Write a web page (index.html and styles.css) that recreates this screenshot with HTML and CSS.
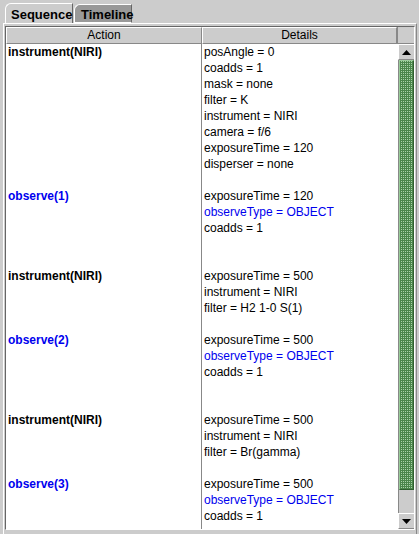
FILE: index.html
```html
<!DOCTYPE html>
<html>
<head>
<meta charset="utf-8">
<link rel="stylesheet" href="styles.css">
</head>
<body>
<div class="app">
  <div class="tabs">
    <div class="tab active">Sequence</div>
    <div class="tab">Timeline</div>
  </div>
  <div class="panel">
    <div class="scrollpane">
      <div class="main">
        <div class="header">
          <div class="hcell action">Action</div>
          <div class="hcell details">Details</div>
        </div>
        <div class="body">
          <div class="row r9">
            <div class="cell action">instrument(NIRI)</div>
            <div class="cell details">
              <div>posAngle = 0</div>
              <div>coadds = 1</div>
              <div>mask = none</div>
              <div>filter = K</div>
              <div>instrument = NIRI</div>
              <div>camera = f/6</div>
              <div>exposureTime = 120</div>
              <div>disperser = none</div>
            </div>
          </div>
          <div class="row r5">
            <div class="cell action blue">observe(1)</div>
            <div class="cell details">
              <div>exposureTime = 120</div>
              <div class="blue">observeType = OBJECT</div>
              <div>coadds = 1</div>
            </div>
          </div>
          <div class="row r4">
            <div class="cell action">instrument(NIRI)</div>
            <div class="cell details">
              <div>exposureTime = 500</div>
              <div>instrument = NIRI</div>
              <div>filter = H2 1-0 S(1)</div>
            </div>
          </div>
          <div class="row r5">
            <div class="cell action blue">observe(2)</div>
            <div class="cell details">
              <div>exposureTime = 500</div>
              <div class="blue">observeType = OBJECT</div>
              <div>coadds = 1</div>
            </div>
          </div>
          <div class="row r4">
            <div class="cell action">instrument(NIRI)</div>
            <div class="cell details">
              <div>exposureTime = 500</div>
              <div>instrument = NIRI</div>
              <div>filter = Br(gamma)</div>
            </div>
          </div>
          <div class="row r5">
            <div class="cell action blue">observe(3)</div>
            <div class="cell details">
              <div>exposureTime = 500</div>
              <div class="blue">observeType = OBJECT</div>
              <div>coadds = 1</div>
            </div>
          </div>
        </div>
      </div>
      <div class="vscroll">
        <div class="corner"></div>
        <div class="btn up"><svg width="9" height="5" viewBox="0 0 9 5"><path d="M4.5 0 L9 5 L0 5 Z" fill="#000"/></svg></div>
        <div class="track">
          <div class="thumb"></div>
          <div class="rest"></div>
        </div>
        <div class="btn down"><svg width="9" height="5" viewBox="0 0 9 5"><path d="M0 0 L9 0 L4.5 5 Z" fill="#000"/></svg></div>
      </div>
    </div>
  </div>
</div>
</body>
</html>
```
FILE: styles.css
```css
* { box-sizing: border-box; }
html, body {
  margin: 0;
  padding: 0;
  background: #cccccc;
  font-family: "Liberation Sans", Arial, sans-serif;
  font-size: 12px;
  color: #000;
}
.app {
  width: 419px;
  height: 534px;
  display: flex;
  flex-direction: column;
  padding: 3px 2px 0 3px;
  overflow: hidden;
}
.tabs {
  display: flex;
  flex: none;
  height: 20px;
  padding-left: 2px;
  gap: 1px;
}
.tab {
  height: 20px;
  padding: 3px 4px 0 6px;
  font-weight: bold;
  font-size: 13px;
  border-top: 1px solid #fff;
  border-left: 1px solid #fff;
  border-right: 1px solid #666;
  border-top-left-radius: 6px 6px;
  background: #999999;
  line-height: 15px;
}
.tab.active {
  background: #cccccc;
  padding-left: 5px;
  width: 68px;
}
.tab:not(.active) {
  width: 58px;
  height: 19px;
  margin-top: 1px;
  padding-top: 2px;
  border-bottom: 1px solid #fff;
}
.panel {
  flex: 1;
  min-height: 0;
  border-top: 1px solid #fff;
  border-left: 1px solid #fff;
  border-right: 1px solid #888;
  padding: 2px 1px 4px 1px;
  display: flex;
}
.scrollpane {
  flex: 1;
  display: flex;
  border-left: 1px solid #666;
  border-top: 1px solid #666;
  border-right: 1px solid #fff;
  border-bottom: 1px solid #fff;
  min-height: 0;
}
.main {
  flex: 1;
  display: flex;
  flex-direction: column;
  min-height: 0;
  overflow: hidden;
}
.header {
  display: flex;
  height: 17px;
  flex: none;
}
.hcell {
  text-align: center;
  border-top: 1px solid #fff;
  border-left: 1px solid #fff;
  border-right: 1px solid #888;
  border-bottom: 1px solid #888;
  line-height: 15px;
  background: #cccccc;
}
.hcell.action { width: 196px; }
.hcell.details { flex: 1; }
.body {
  flex: 1;
  min-height: 0;
  background: #fff;
  overflow: hidden;
}
.row {
  display: flex;
  line-height: 16px;
}
.r9 { height: 144px; }
.r5 { height: 80px; }
.r4 { height: 64px; }
.cell.action {
  width: 196px;
  font-weight: bold;
  padding-left: 2px;
  border-right: 1px solid #888;
}
.cell.details {
  flex: 1;
  padding-left: 2px;
}
.blue { color: #0000ee; }
.vscroll {
  width: 17px;
  flex: none;
  min-height: 0;
  display: flex;
  flex-direction: column;
  background: #cccccc;
  border-left: 1px solid #fff;
}
.corner {
  height: 17px;
  flex: none;
  border-bottom: 1px solid #888;
  border-left: 1px solid #888;
  margin-left: -1px;
}
.btn {
  height: 16px;
  flex: none;
  display: flex;
  align-items: center;
  justify-content: center;
  background: #cccccc;
  border-top: 1px solid #fff;
  border-left: 1px solid #fff;
  border-bottom: 1px solid #888;
}
.track {
  flex: 1;
  min-height: 0;
  display: flex;
  flex-direction: column;
  border-left: 1px solid #888;
}
.thumb {
  height: 430px;
  flex: none;
  border: 1px solid #2f5f2f;
  border-top-color: #99cc99;
  border-left-color: #99cc99;
  background-color: #4a864a;
  background-image: conic-gradient(#a9d2a9 0 25%, transparent 0 100%);
  background-size: 2px 2px;
}
.rest {
  flex: 1;
  background: #cccccc;
}
```
